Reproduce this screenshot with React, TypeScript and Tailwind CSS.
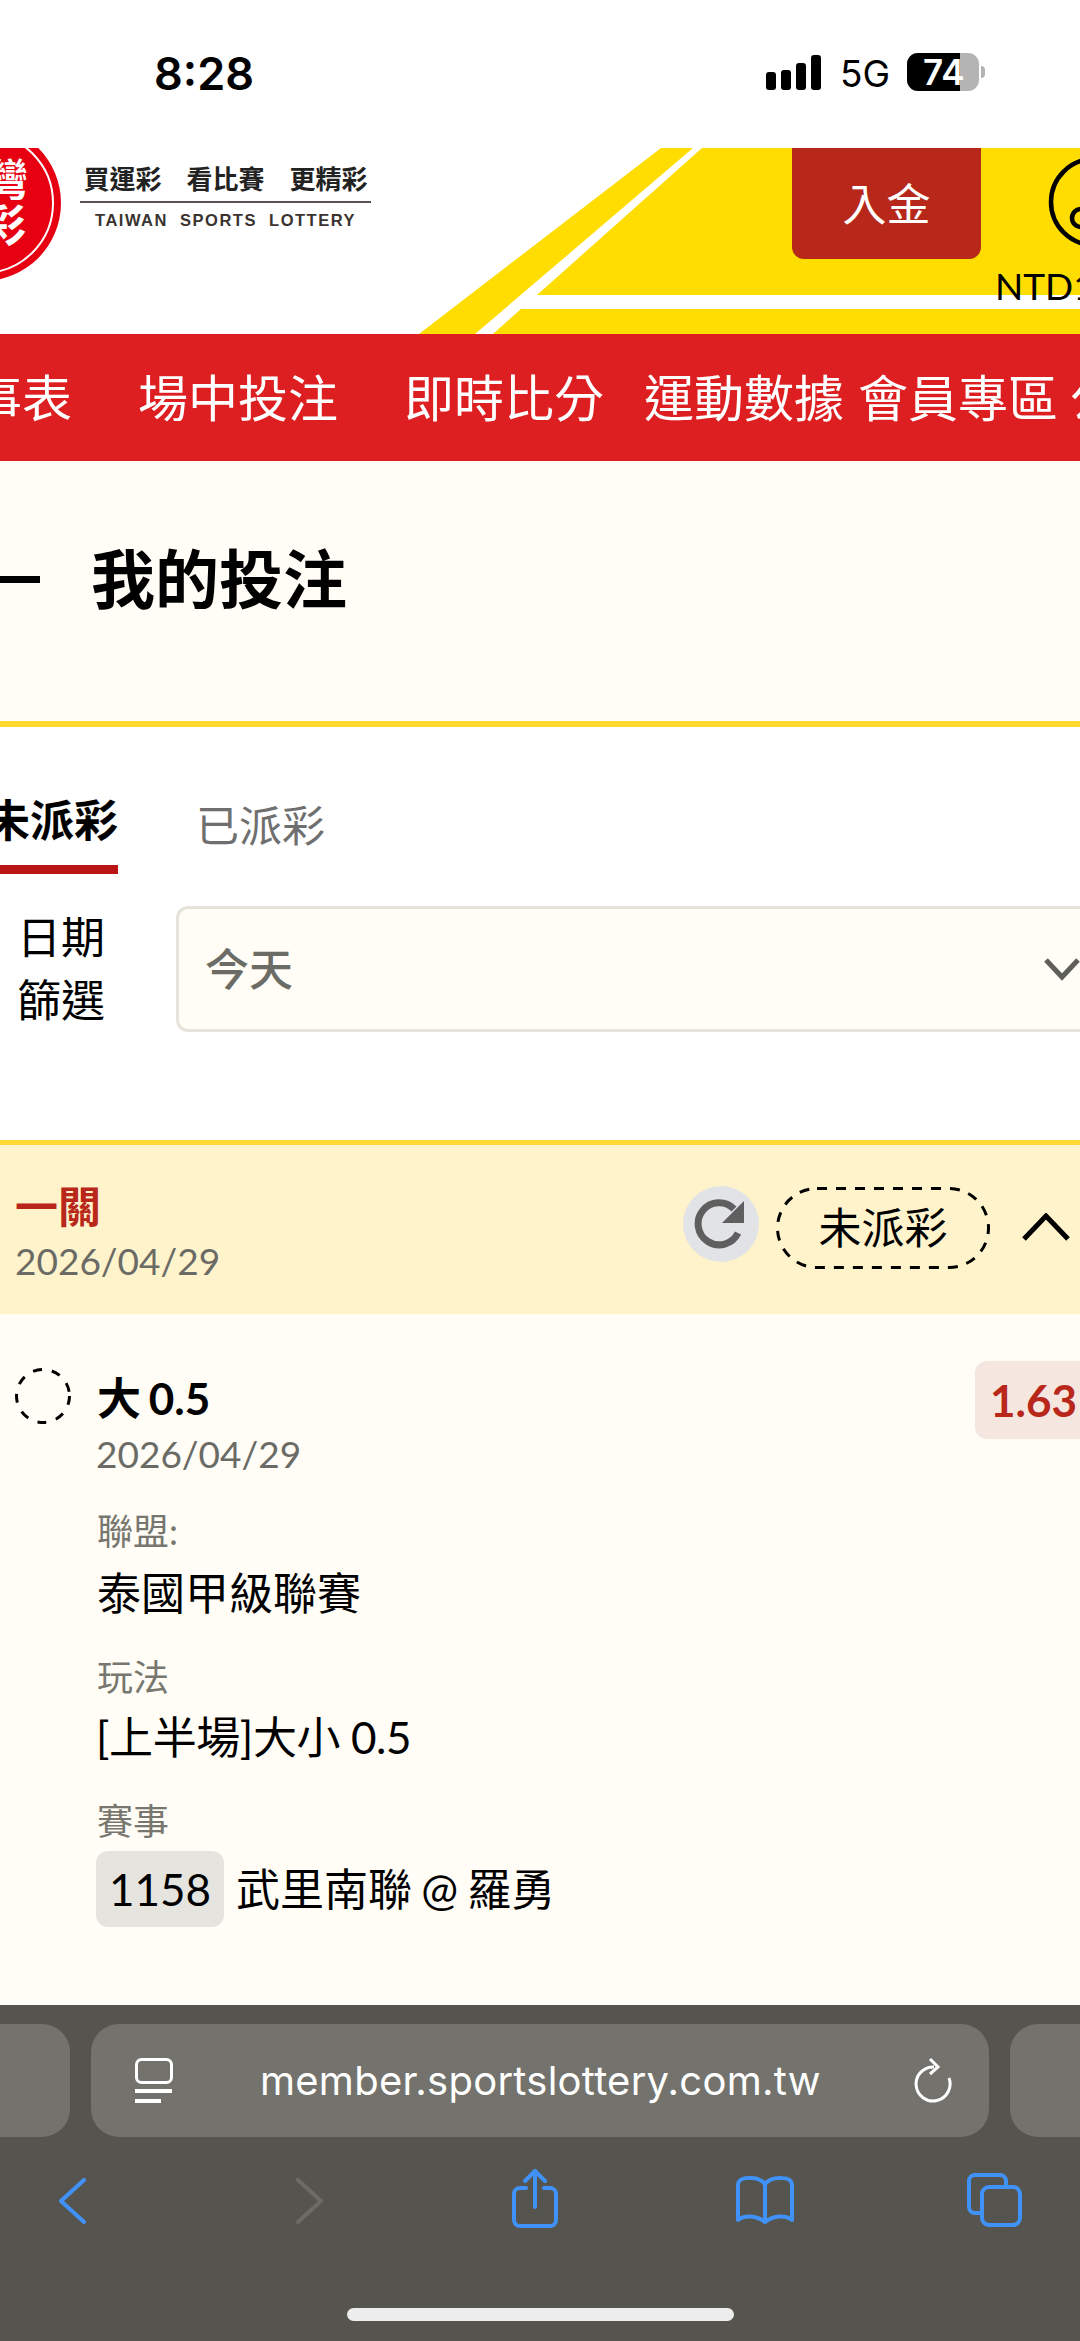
export default function App() {
  const yellow = "#ffdd00";
  const blue = "#4092f8";
  return (
    <div className="w-[1080px] h-[2341px] overflow-hidden flex flex-col bg-white text-black font-['Lato','Noto_Sans_CJK_TC',sans-serif]">
      {/* status bar */}
      <div className="h-[148px] shrink-0 relative bg-white">
        <div className="absolute left-[154px] top-[47px] text-[45px] leading-[54px] font-semibold font-['Inter',sans-serif]">8:28</div>
        <div className="absolute left-[766px] top-[55px] flex items-end gap-[5px] h-[35px]">
          <div className="w-[10px] h-[18px] bg-black rounded-[3px]" />
          <div className="w-[10px] h-[20px] bg-black rounded-[3px]" />
          <div className="w-[10px] h-[27px] bg-black rounded-[3px]" />
          <div className="w-[10px] h-[35px] bg-black rounded-[3px]" />
        </div>
        <div className="absolute left-[840px] top-[52px] text-[37px] leading-[44px] font-['Inter',sans-serif]">5G</div>
        <div className="absolute left-[907px] top-[53px] w-[72px] h-[38px] rounded-[11px] bg-[#b4b4b4] overflow-hidden">
          <div className="w-[53px] h-full bg-black text-white text-[35px] leading-[38px] font-semibold font-['Inter',sans-serif] pl-[16px]">74</div>
        </div>
        <div className="absolute left-[981px] top-[66px] w-[4px] h-[12px] rounded-r-[4px] bg-[#b4b4b4]" />
      </div>

      {/* logo header */}
      <div className="h-[186px] shrink-0 relative overflow-hidden bg-white">
        <svg className="absolute left-0 top-0" width="1080" height="186" viewBox="0 0 1080 186">
          <polygon points="661,0 693,0 475,186 419,186" fill={yellow} />
          <polygon points="702,0 1080,0 1080,147 537,147" fill={yellow} />
          <polygon points="521,161 1080,161 1080,186 493,186" fill={yellow} />
          <circle cx="-17" cy="55" r="78" fill="#e60012" />
          <circle cx="-17" cy="55" r="70" fill="none" stroke="#ffffff" strokeWidth="2" />
        </svg>
        <div className="absolute left-[-16px] top-[8px] text-[44px] leading-[46px] text-white font-bold">灣</div>
        <div className="absolute left-[-18px] top-[54px] text-[44px] leading-[46px] text-white font-bold">彩</div>
        <div className="absolute left-[80px] top-[16px] w-[291px] flex flex-col items-center">
          <div className="flex gap-[25px] text-[26px] leading-[30px] font-bold text-[#222] whitespace-nowrap">
            <span>買運彩</span>
            <span>看比賽</span>
            <span>更精彩</span>
          </div>
          <div className="w-full h-[2px] bg-[#5a5250] mt-[7px]" />
          <div className="mt-[6px] text-[16.5px] leading-[22px] font-bold tracking-[1.5px] text-[#3a3330] whitespace-pre font-['Liberation_Sans',sans-serif]">TAIWAN  SPORTS  LOTTERY</div>
        </div>
        <div className="absolute left-[792px] top-0 w-[189px] h-[111px] rounded-b-[12px] bg-[#b7281a] flex items-center justify-center text-white text-[44px]">入金</div>
        <svg className="absolute left-[1048px] top-[8px]" width="32" height="92" viewBox="0 0 32 92">
          <circle cx="46" cy="46" r="43" fill="none" stroke="#000" strokeWidth="4.5" />
          <circle cx="33" cy="62" r="9" fill="none" stroke="#000" strokeWidth="4.5" />
        </svg>
        <div className="absolute left-[995px] top-[116px] text-[37px] leading-[44px] whitespace-nowrap">NTD1</div>
      </div>

      {/* nav */}
      <div className="h-[127px] shrink-0 bg-[#de1f21] flex items-center text-white text-[50px] leading-[60px] whitespace-nowrap ml-[-78px] w-[1300px]">
        <span className="shrink-0 mr-[66px]">賽事表</span>
        <span className="shrink-0 mr-[66px]">場中投注</span>
        <span className="shrink-0 mr-[40px]">即時比分</span>
        <span className="shrink-0 mr-[14px]">運動數據</span>
        <span className="shrink-0 mr-[12px]">會員專區</span>
        <span className="shrink-0">公告</span>
      </div>

      {/* title */}
      <div className="h-[266px] shrink-0 bg-[#fffdf6] border-b-[6px] border-[#ffd92f] flex items-center">
        <div className="w-[40px] h-[7px] bg-black mr-[51px] mt-[-24px]" />
        <h1 className="text-[64px] leading-[76px] font-bold mt-[-24px]">我的投注</h1>
      </div>

      {/* tabs */}
      <div className="flex shrink-0 h-[170px] items-start bg-white">
        <div className="ml-[-14px] mr-[78px] w-[132px] h-[148px] flex flex-col">
          <div className="text-[44px] leading-[54px] font-bold mt-[66px] whitespace-nowrap">未派彩</div>
          <div className="mt-[18px] h-[9px] bg-[#bb1414]" />
        </div>
        <div className="text-[43px] leading-[54px] text-[#6f6f6f] mt-[72px] whitespace-nowrap">已派彩</div>
      </div>

      {/* filter */}
      <div className="flex shrink-0 items-start bg-white h-[243px]">
        <div className="w-[176px] shrink-0 pl-[17px] pt-[9px] text-[44px] leading-[63px]">
          <div>日期</div>
          <div>篩選</div>
        </div>
        <div className="w-[1000px] shrink-0 h-[126px] mt-[9px] rounded-[12px] border-[3px] border-[#e6e3da] bg-[#fffdf6] flex items-center pl-[26px] text-[44px] font-medium text-[#6c6c66]">
          今天
          <svg className="ml-[751px]" width="36" height="24" viewBox="0 0 36 24">
            <path d="M2 3 L18 20 L34 3" fill="none" stroke="#5f5f5a" strokeWidth="5" />
          </svg>
        </div>
      </div>

      {/* section header */}
      <div className="h-[174px] shrink-0 bg-[#fff3cc] border-t-[5px] border-[#ffd92f] flex items-start relative">
        <div className="pl-[15px] pt-[36px]">
          <div className="text-[43px] leading-[52px] font-bold text-[#b8271a]">一關</div>
          <div className="text-[37px] leading-[46px] mt-[5px] text-[#6b6b66]">2026/04/29</div>
        </div>
        <div className="ml-auto mr-[10px] mt-[41px] flex items-start">
          <div className="w-[76px] h-[76px] rounded-full bg-[#e2e3e6] flex items-center justify-center">
            <svg width="54" height="54" viewBox="0 0 54 54">
              <path d="M44 36 A 21 21 0 1 1 40 12" fill="none" stroke="#5f5f5f" strokeWidth="7" />
              <polygon points="50,4 50,26 28,26" fill="#5f5f5f" />
            </svg>
          </div>
          <div className="ml-[17px] mt-[1px] w-[214px] h-[82px] relative flex items-center justify-center text-[43px] leading-[52px]">
            <svg className="absolute left-0 top-0" width="214" height="82" viewBox="0 0 214 82">
              <rect x="1.5" y="1.5" width="211" height="79" rx="39.5" fill="none" stroke="#000" strokeWidth="3" strokeDasharray="10 9" />
            </svg>
            未派彩
          </div>
          <svg className="ml-[32px] mt-[27px]" width="48" height="28" viewBox="0 0 48 28">
            <path d="M2 26 L24 3 L46 26" fill="none" stroke="#000" strokeWidth="5" />
          </svg>
        </div>
      </div>

      {/* bet body */}
      <div className="flex-1 bg-[#fffdf6] pl-[15px] pt-[46px] relative">
        <div className="flex items-start">
          <svg className="mt-[8px] shrink-0" width="56" height="56" viewBox="0 0 56 56">
            <circle cx="28" cy="28" r="26.5" fill="none" stroke="#000" strokeWidth="3" strokeDasharray="9 10" />
          </svg>
          <div className="ml-[26px] flex-1">
            <div className="text-[44px] leading-[54px] font-bold mt-[11px] [word-spacing:-3px]">大 0.5</div>
            <div className="text-[37px] leading-[46px] mt-[6px] ml-[-1px] text-[#6b6b66]">2026/04/29</div>
            <div className="text-[36px] leading-[44px] mt-[32px] text-[#77776f]">聯盟:</div>
            <div className="text-[44px] leading-[54px] mt-[13px]">泰國甲級聯賽</div>
            <div className="text-[36px] leading-[44px] mt-[35px] text-[#77776f]">玩法</div>
            <div className="text-[44px] leading-[54px] mt-[11px] tracking-[-0.4px] ml-[-1px]">[上半場]大小 0.5</div>
            <div className="text-[36px] leading-[44px] mt-[35px] text-[#77776f]">賽事</div>
            <div className="flex items-center mt-[8px] ml-[-1px]">
              <div className="h-[76px] w-[128px] rounded-[12px] bg-[#e6e4df] flex items-center justify-center text-[44px]">1158</div>
              <div className="ml-[12px] text-[44px] leading-[54px] whitespace-nowrap [word-spacing:-2px]">武里南聯 @ 羅勇</div>
            </div>
          </div>
        </div>
        <div className="absolute left-[975px] top-[47px] w-[130px] h-[78px] rounded-[12px] bg-[#f5e6df] pl-[15px] text-[44px] leading-[78px] font-bold text-[#b8271a]">1.63</div>
      </div>

      {/* browser bar */}
      <div className="h-[336px] shrink-0 bg-[#55544e] flex flex-col">
        <div className="flex mt-[19px] h-[113px] ml-[-40px] w-[1200px] gap-[21px] shrink-0">
          <div className="w-[110px] rounded-[28px] bg-[#73726c]" />
          <div className="w-[898px] rounded-[28px] bg-[#73726c] flex items-center text-white">
            <svg className="ml-[44px]" width="38" height="46" viewBox="0 0 38 46">
              <rect x="1.5" y="1.5" width="35" height="23" rx="5" fill="none" stroke="#fff" strokeWidth="3" />
              <rect x="0" y="31" width="37" height="4" fill="#fff" />
              <rect x="0" y="41" width="26" height="4" fill="#fff" />
            </svg>
            <div className="ml-[87px] text-[40px] leading-[46px] tracking-[0.25px] whitespace-nowrap font-['Inter',sans-serif]">member.sportslottery.com.tw</div>
            <svg className="ml-auto mr-[35px]" width="40" height="46" viewBox="0 0 40 46">
              <path d="M20 9 A 17 17 0 1 0 35 20" fill="none" stroke="#fff" strokeWidth="3" />
              <path d="M16 1 L24 9 L16 16" fill="none" stroke="#fff" strokeWidth="3" />
            </svg>
          </div>
          <div className="w-[100px] rounded-[28px] bg-[#73726c]" />
        </div>
        <div className="flex items-start mt-[30px] h-[62px] shrink-0 pl-[58px]">
          <svg className="mt-[11px]" width="30" height="46" viewBox="0 0 30 46">
            <path d="M26 2 L3 23 L26 44" fill="none" stroke={blue} strokeWidth="4" strokeLinecap="round" strokeLinejoin="round" />
          </svg>
          <svg className="mt-[11px] ml-[206px]" width="30" height="46" viewBox="0 0 30 46">
            <path d="M4 2 L27 23 L4 44" fill="none" stroke="#6c6b65" strokeWidth="4" strokeLinecap="round" strokeLinejoin="round" />
          </svg>
          <svg className="ml-[186px]" width="50" height="62" viewBox="0 0 50 62" fill="none" stroke={blue} strokeWidth="4" strokeLinecap="round" strokeLinejoin="round">
            <path d="M16 21 H10 a6 6 0 0 0 -6 6 V53 a6 6 0 0 0 6 6 H40 a6 6 0 0 0 6 -6 V27 a6 6 0 0 0 -6 -6 H34" />
            <path d="M25 4 V40" />
            <path d="M15 14 L25 4 L35 14" />
          </svg>
          <svg className="mt-[7px] ml-[174px]" width="62" height="52" viewBox="0 0 62 52" fill="none" stroke={blue} strokeWidth="4" strokeLinecap="round" strokeLinejoin="round">
            <path d="M31 10 C27 5 20 3.5 14 4 C9 4 4 6 4 11 V46 C10 41 22 41 31 48 C40 41 52 41 58 46 V11 C58 6 53 4 48 4 C42 3.5 35 5 31 10 Z" />
            <path d="M31 10 V48" />
          </svg>
          <svg className="mt-[4px] ml-[169px]" width="60" height="60" viewBox="0 0 60 60" fill="none" stroke={blue} strokeWidth="4" strokeLinecap="round" strokeLinejoin="round">
            <path d="M15 42 H10 a6 6 0 0 1 -6 -6 V10 a6 6 0 0 1 6 -6 H35 a6 6 0 0 1 6 6 V16" />
            <rect x="17" y="16" width="38" height="38" rx="7" />
          </svg>
        </div>
        <div className="mt-auto mb-[20px] mx-auto w-[387px] h-[13px] rounded-full bg-[#ededed]" />
      </div>
    </div>
  );
}
